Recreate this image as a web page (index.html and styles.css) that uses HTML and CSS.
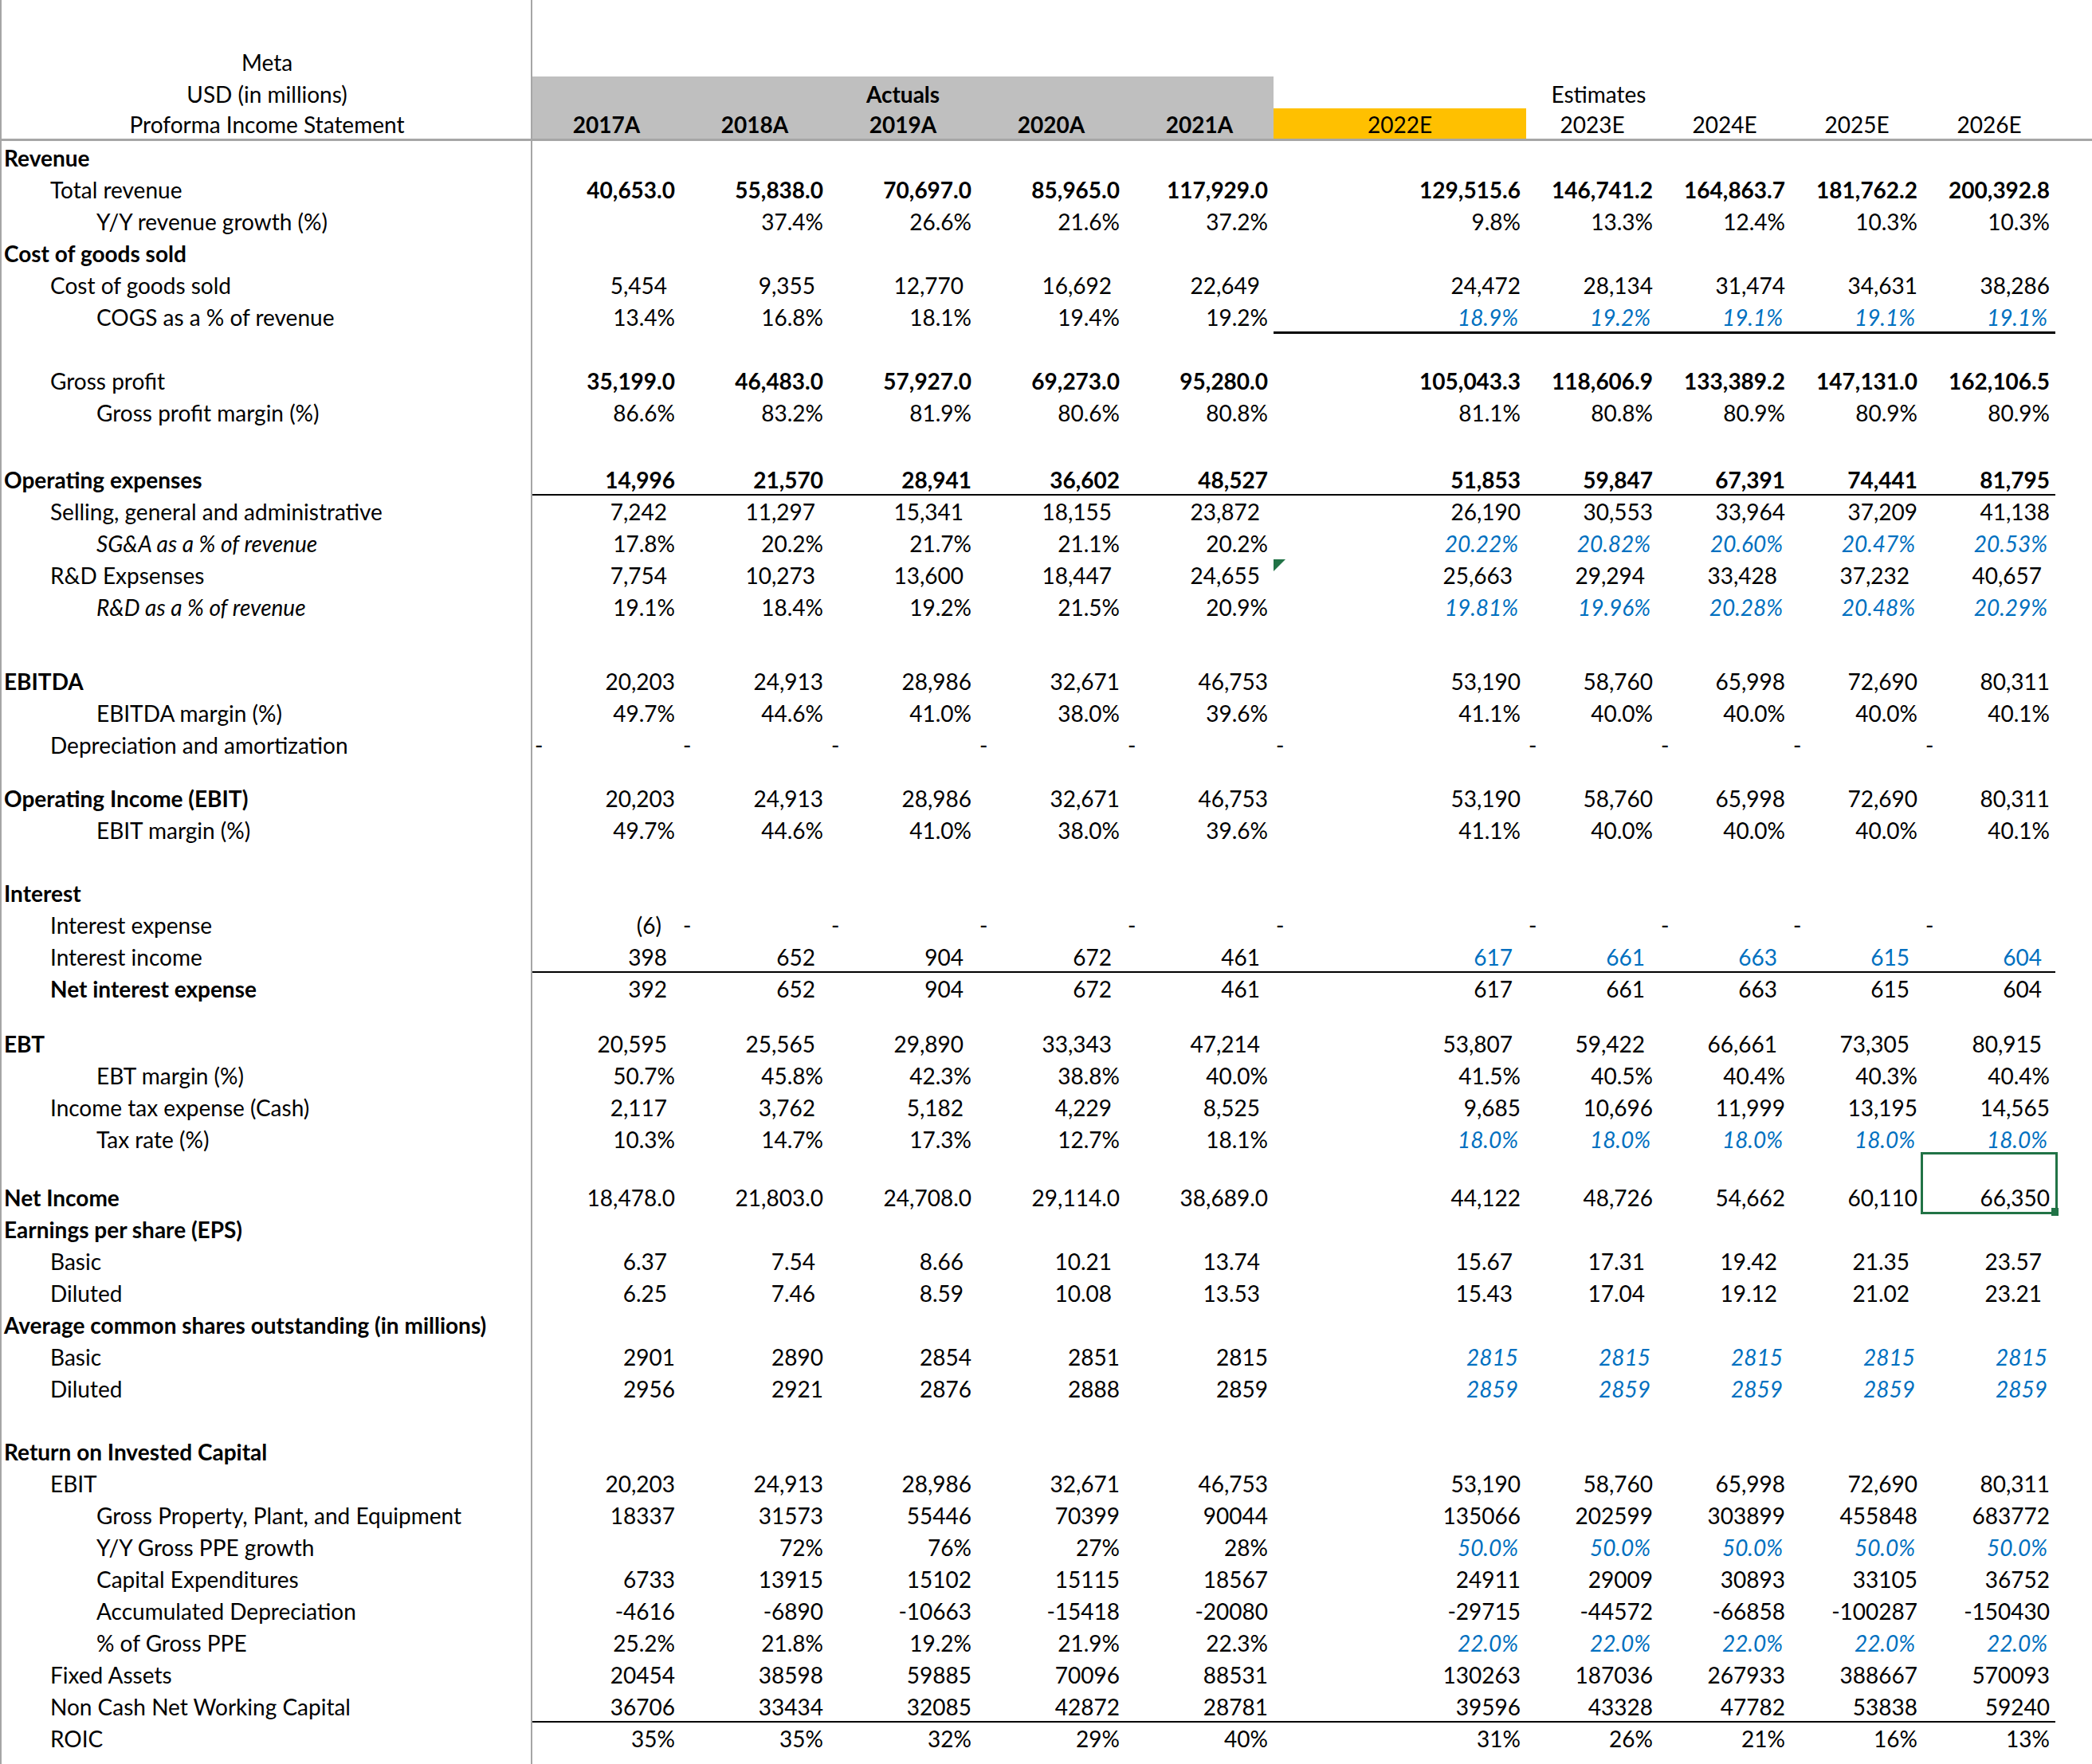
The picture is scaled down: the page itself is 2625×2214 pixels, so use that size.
FILE: index.html
```html
<!DOCTYPE html>
<html lang="en">
<head>
<meta charset="utf-8">
<title>Meta Proforma Income Statement</title>
<link rel="stylesheet" href="styles.css">
</head>
<body>
<div class="sheet">
  <div class="row h56"></div>
  <div class="row"><div class="c ctr">Meta</div></div>
  <div class="row">
    <div class="c ctr">USD (in millions)</div>
    <div class="c ctr gray actuals b">Actuals</div>
    <div class="c"></div>
    <div class="c ctr est">Estimates</div>
  </div>
  <div class="row hline">
    <div class="c ctr">Proforma Income Statement</div>
    <div class="c ctr gray b">2017A</div>
    <div class="c ctr gray b">2018A</div>
    <div class="c ctr gray b">2019A</div>
    <div class="c ctr gray b">2020A</div>
    <div class="c ctr gray b">2021A</div>
    <div class="c ctr yellow">2022E</div>
    <div class="c ctr">2023E</div>
    <div class="c ctr">2024E</div>
    <div class="c ctr">2025E</div>
    <div class="c ctr">2026E</div>
  </div>

  <div class="row h39"><div class="c lbl l0 b">Revenue</div></div>
  <div class="row">
    <div class="c lbl l1">Total revenue</div>
    <div class="c b">40,653.0</div><div class="c b">55,838.0</div><div class="c b">70,697.0</div><div class="c b">85,965.0</div><div class="c b">117,929.0</div>
    <div class="c b">129,515.6</div><div class="c b">146,741.2</div><div class="c b">164,863.7</div><div class="c b">181,762.2</div><div class="c b">200,392.8</div>
  </div>
  <div class="row">
    <div class="c lbl l2">Y/Y revenue growth (%)</div>
    <div class="c"></div><div class="c">37.4%</div><div class="c">26.6%</div><div class="c">21.6%</div><div class="c">37.2%</div>
    <div class="c">9.8%</div><div class="c">13.3%</div><div class="c">12.4%</div><div class="c">10.3%</div><div class="c">10.3%</div>
  </div>
  <div class="row"><div class="c lbl l0 b">Cost of goods sold</div></div>
  <div class="row">
    <div class="c lbl l1">Cost of goods sold</div>
    <div class="c w">5,454</div><div class="c w">9,355</div><div class="c w">12,770</div><div class="c w">16,692</div><div class="c w">22,649</div>
    <div class="c">24,472</div><div class="c">28,134</div><div class="c">31,474</div><div class="c">34,631</div><div class="c">38,286</div>
  </div>
  <div class="row">
    <div class="c lbl l2">COGS as a % of revenue</div>
    <div class="c">13.4%</div><div class="c">16.8%</div><div class="c">18.1%</div><div class="c">19.4%</div><div class="c">19.2%</div>
    <div class="c i u3">18.9%</div><div class="c i u3">19.2%</div><div class="c i u3">19.1%</div><div class="c i u3">19.1%</div><div class="c i u3">19.1%</div>
  </div>
  <div class="row g40"></div>
  <div class="row">
    <div class="c lbl l1">Gross profit</div>
    <div class="c b">35,199.0</div><div class="c b">46,483.0</div><div class="c b">57,927.0</div><div class="c b">69,273.0</div><div class="c b">95,280.0</div>
    <div class="c b">105,043.3</div><div class="c b">118,606.9</div><div class="c b">133,389.2</div><div class="c b">147,131.0</div><div class="c b">162,106.5</div>
  </div>
  <div class="row">
    <div class="c lbl l2">Gross profit margin (%)</div>
    <div class="c">86.6%</div><div class="c">83.2%</div><div class="c">81.9%</div><div class="c">80.6%</div><div class="c">80.8%</div>
    <div class="c">81.1%</div><div class="c">80.8%</div><div class="c">80.9%</div><div class="c">80.9%</div><div class="c">80.9%</div>
  </div>
  <div class="row g44"></div>
  <div class="row">
    <div class="c lbl l0 b">Operating expenses</div>
    <div class="c b u2">14,996</div><div class="c b u2">21,570</div><div class="c b u2">28,941</div><div class="c b u2">36,602</div><div class="c b u2">48,527</div>
    <div class="c b u2">51,853</div><div class="c b u2">59,847</div><div class="c b u2">67,391</div><div class="c b u2">74,441</div><div class="c b u2">81,795</div>
  </div>
  <div class="row">
    <div class="c lbl l1">Selling, general and administrative</div>
    <div class="c w">7,242</div><div class="c w">11,297</div><div class="c w">15,341</div><div class="c w">18,155</div><div class="c w">23,872</div>
    <div class="c">26,190</div><div class="c">30,553</div><div class="c">33,964</div><div class="c">37,209</div><div class="c">41,138</div>
  </div>
  <div class="row">
    <div class="c lbl l2 it">SG&amp;A as a % of revenue</div>
    <div class="c">17.8%</div><div class="c">20.2%</div><div class="c">21.7%</div><div class="c">21.1%</div><div class="c">20.2%</div>
    <div class="c i">20.22%</div><div class="c i">20.82%</div><div class="c i">20.60%</div><div class="c i">20.47%</div><div class="c i">20.53%</div>
  </div>
  <div class="row">
    <div class="c lbl l1">R&amp;D Expsenses</div>
    <div class="c w">7,754</div><div class="c w">10,273</div><div class="c w">13,600</div><div class="c w">18,447</div><div class="c w">24,655</div>
    <div class="c w tri">25,663</div><div class="c w">29,294</div><div class="c w">33,428</div><div class="c w">37,232</div><div class="c w">40,657</div>
  </div>
  <div class="row">
    <div class="c lbl l2 it">R&amp;D as a % of revenue</div>
    <div class="c">19.1%</div><div class="c">18.4%</div><div class="c">19.2%</div><div class="c">21.5%</div><div class="c">20.9%</div>
    <div class="c i">19.81%</div><div class="c i">19.96%</div><div class="c i">20.28%</div><div class="c i">20.48%</div><div class="c i">20.29%</div>
  </div>
  <div class="row g53"></div>
  <div class="row">
    <div class="c lbl l0 b">EBITDA</div>
    <div class="c">20,203</div><div class="c">24,913</div><div class="c">28,986</div><div class="c">32,671</div><div class="c">46,753</div>
    <div class="c">53,190</div><div class="c">58,760</div><div class="c">65,998</div><div class="c">72,690</div><div class="c">80,311</div>
  </div>
  <div class="row">
    <div class="c lbl l2">EBITDA margin (%)</div>
    <div class="c">49.7%</div><div class="c">44.6%</div><div class="c">41.0%</div><div class="c">38.0%</div><div class="c">39.6%</div>
    <div class="c">41.1%</div><div class="c">40.0%</div><div class="c">40.0%</div><div class="c">40.0%</div><div class="c">40.1%</div>
  </div>
  <div class="row">
    <div class="c lbl l1">Depreciation and amortization</div>
    <div class="c d">-</div><div class="c d">-</div><div class="c d">-</div><div class="c d">-</div><div class="c d">-</div>
    <div class="c d">-</div><div class="c d">-</div><div class="c d">-</div><div class="c d">-</div><div class="c d">-</div>
  </div>
  <div class="row g27"></div>
  <div class="row">
    <div class="c lbl l0 b">Operating Income (EBIT)</div>
    <div class="c">20,203</div><div class="c">24,913</div><div class="c">28,986</div><div class="c">32,671</div><div class="c">46,753</div>
    <div class="c">53,190</div><div class="c">58,760</div><div class="c">65,998</div><div class="c">72,690</div><div class="c">80,311</div>
  </div>
  <div class="row">
    <div class="c lbl l2">EBIT margin (%)</div>
    <div class="c">49.7%</div><div class="c">44.6%</div><div class="c">41.0%</div><div class="c">38.0%</div><div class="c">39.6%</div>
    <div class="c">41.1%</div><div class="c">40.0%</div><div class="c">40.0%</div><div class="c">40.0%</div><div class="c">40.1%</div>
  </div>
  <div class="row g39"></div>
  <div class="row"><div class="c lbl l0 b">Interest</div></div>
  <div class="row">
    <div class="c lbl l1">Interest expense</div>
    <div class="c neg">(6)</div><div class="c d">-</div><div class="c d">-</div><div class="c d">-</div><div class="c d">-</div>
    <div class="c d">-</div><div class="c d">-</div><div class="c d">-</div><div class="c d">-</div><div class="c d">-</div>
  </div>
  <div class="row">
    <div class="c lbl l1">Interest income</div>
    <div class="c w u2">398</div><div class="c w u2">652</div><div class="c w u2">904</div><div class="c w u2">672</div><div class="c w u2">461</div>
    <div class="c w u2 blue">617</div><div class="c w u2 blue">661</div><div class="c w u2 blue">663</div><div class="c w u2 blue">615</div><div class="c w u2 blue">604</div>
  </div>
  <div class="row">
    <div class="c lbl l1 b">Net interest expense</div>
    <div class="c w">392</div><div class="c w">652</div><div class="c w">904</div><div class="c w">672</div><div class="c w">461</div>
    <div class="c w">617</div><div class="c w">661</div><div class="c w">663</div><div class="c w">615</div><div class="c w">604</div>
  </div>
  <div class="row g29"></div>
  <div class="row">
    <div class="c lbl l0 b">EBT</div>
    <div class="c w">20,595</div><div class="c w">25,565</div><div class="c w">29,890</div><div class="c w">33,343</div><div class="c w">47,214</div>
    <div class="c w">53,807</div><div class="c w">59,422</div><div class="c w">66,661</div><div class="c w">73,305</div><div class="c w">80,915</div>
  </div>
  <div class="row">
    <div class="c lbl l2">EBT margin (%)</div>
    <div class="c">50.7%</div><div class="c">45.8%</div><div class="c">42.3%</div><div class="c">38.8%</div><div class="c">40.0%</div>
    <div class="c">41.5%</div><div class="c">40.5%</div><div class="c">40.4%</div><div class="c">40.3%</div><div class="c">40.4%</div>
  </div>
  <div class="row">
    <div class="c lbl l1">Income tax expense (Cash)</div>
    <div class="c w">2,117</div><div class="c w">3,762</div><div class="c w">5,182</div><div class="c w">4,229</div><div class="c w">8,525</div>
    <div class="c">9,685</div><div class="c">10,696</div><div class="c">11,999</div><div class="c">13,195</div><div class="c">14,565</div>
  </div>
  <div class="row">
    <div class="c lbl l2">Tax rate (%)</div>
    <div class="c">10.3%</div><div class="c">14.7%</div><div class="c">17.3%</div><div class="c">12.7%</div><div class="c">18.1%</div>
    <div class="c i">18.0%</div><div class="c i">18.0%</div><div class="c i">18.0%</div><div class="c i">18.0%</div><div class="c i">18.0%</div>
  </div>
  <div class="row h73">
    <div class="c lbl l0 b rowsel">Net Income</div>
    <div class="c">18,478.0</div><div class="c">21,803.0</div><div class="c">24,708.0</div><div class="c">29,114.0</div><div class="c">38,689.0</div>
    <div class="c">44,122</div><div class="c">48,726</div><div class="c">54,662</div><div class="c">60,110</div><div class="c sel">66,350</div>
  </div>
  <div class="row"><div class="c lbl l0 b">Earnings per share (EPS)</div></div>
  <div class="row">
    <div class="c lbl l1">Basic</div>
    <div class="c w">6.37</div><div class="c w">7.54</div><div class="c w">8.66</div><div class="c w">10.21</div><div class="c w">13.74</div>
    <div class="c w">15.67</div><div class="c w">17.31</div><div class="c w">19.42</div><div class="c w">21.35</div><div class="c w">23.57</div>
  </div>
  <div class="row">
    <div class="c lbl l1">Diluted</div>
    <div class="c w">6.25</div><div class="c w">7.46</div><div class="c w">8.59</div><div class="c w">10.08</div><div class="c w">13.53</div>
    <div class="c w">15.43</div><div class="c w">17.04</div><div class="c w">19.12</div><div class="c w">21.02</div><div class="c w">23.21</div>
  </div>
  <div class="row"><div class="c lbl l0 b">Average common shares outstanding (in millions)</div></div>
  <div class="row">
    <div class="c lbl l1">Basic</div>
    <div class="c">2901</div><div class="c">2890</div><div class="c">2854</div><div class="c">2851</div><div class="c">2815</div>
    <div class="c i">2815</div><div class="c i">2815</div><div class="c i">2815</div><div class="c i">2815</div><div class="c i">2815</div>
  </div>
  <div class="row">
    <div class="c lbl l1">Diluted</div>
    <div class="c">2956</div><div class="c">2921</div><div class="c">2876</div><div class="c">2888</div><div class="c">2859</div>
    <div class="c i">2859</div><div class="c i">2859</div><div class="c i">2859</div><div class="c i">2859</div><div class="c i">2859</div>
  </div>
  <div class="row g39"></div>
  <div class="row"><div class="c lbl l0 b">Return on Invested Capital</div></div>
  <div class="row">
    <div class="c lbl l1">EBIT</div>
    <div class="c">20,203</div><div class="c">24,913</div><div class="c">28,986</div><div class="c">32,671</div><div class="c">46,753</div>
    <div class="c">53,190</div><div class="c">58,760</div><div class="c">65,998</div><div class="c">72,690</div><div class="c">80,311</div>
  </div>
  <div class="row">
    <div class="c lbl l2">Gross Property, Plant, and Equipment</div>
    <div class="c">18337</div><div class="c">31573</div><div class="c">55446</div><div class="c">70399</div><div class="c">90044</div>
    <div class="c">135066</div><div class="c">202599</div><div class="c">303899</div><div class="c">455848</div><div class="c">683772</div>
  </div>
  <div class="row">
    <div class="c lbl l2">Y/Y Gross PPE growth</div>
    <div class="c"></div><div class="c">72%</div><div class="c">76%</div><div class="c">27%</div><div class="c">28%</div>
    <div class="c i">50.0%</div><div class="c i">50.0%</div><div class="c i">50.0%</div><div class="c i">50.0%</div><div class="c i">50.0%</div>
  </div>
  <div class="row">
    <div class="c lbl l2">Capital Expenditures</div>
    <div class="c">6733</div><div class="c">13915</div><div class="c">15102</div><div class="c">15115</div><div class="c">18567</div>
    <div class="c">24911</div><div class="c">29009</div><div class="c">30893</div><div class="c">33105</div><div class="c">36752</div>
  </div>
  <div class="row">
    <div class="c lbl l2">Accumulated Depreciation</div>
    <div class="c">-4616</div><div class="c">-6890</div><div class="c">-10663</div><div class="c">-15418</div><div class="c">-20080</div>
    <div class="c">-29715</div><div class="c">-44572</div><div class="c">-66858</div><div class="c">-100287</div><div class="c">-150430</div>
  </div>
  <div class="row">
    <div class="c lbl l2">% of Gross PPE</div>
    <div class="c">25.2%</div><div class="c">21.8%</div><div class="c">19.2%</div><div class="c">21.9%</div><div class="c">22.3%</div>
    <div class="c i">22.0%</div><div class="c i">22.0%</div><div class="c i">22.0%</div><div class="c i">22.0%</div><div class="c i">22.0%</div>
  </div>
  <div class="row">
    <div class="c lbl l1">Fixed Assets</div>
    <div class="c">20454</div><div class="c">38598</div><div class="c">59885</div><div class="c">70096</div><div class="c">88531</div>
    <div class="c">130263</div><div class="c">187036</div><div class="c">267933</div><div class="c">388667</div><div class="c">570093</div>
  </div>
  <div class="row">
    <div class="c lbl l1">Non Cash Net Working Capital</div>
    <div class="c u2">36706</div><div class="c u2">33434</div><div class="c u2">32085</div><div class="c u2">42872</div><div class="c u2">28781</div>
    <div class="c u2">39596</div><div class="c u2">43328</div><div class="c u2">47782</div><div class="c u2">53838</div><div class="c u2">59240</div>
  </div>
  <div class="row">
    <div class="c lbl l1">ROIC</div>
    <div class="c">35%</div><div class="c">35%</div><div class="c">32%</div><div class="c">29%</div><div class="c">40%</div>
    <div class="c">31%</div><div class="c">26%</div><div class="c">21%</div><div class="c">16%</div><div class="c">13%</div>
  </div>
</div>
</body>
</html>
```

FILE: styles.css
```css
html, body {
  margin: 0;
  padding: 0;
  background: #ffffff;
}

body {
  font-family: Lato, "Liberation Sans", sans-serif;
  font-size: 28px;
  color: #000000;
}

.sheet {
  width: 2625px;
  min-height: 2214px;
  box-sizing: border-box;
  border-left: 2px solid #a6a6a6;
  background: linear-gradient(#a6a6a6, #a6a6a6) 664px 0 / 2px 100% no-repeat;
  overflow: hidden;
}

.row {
  display: grid;
  grid-template-columns: 666px repeat(5, 186px) 317px repeat(4, 166px) 1fr;
  height: 40px;
  box-sizing: border-box;
}

.h56 { height: 56px; }
.h39 { height: 39px; }
.h73 { height: 73px; }
.g40 { height: 40px; }
.g44 { height: 44px; }
.g53 { height: 53px; }
.g27 { height: 27px; }
.g39 { height: 39px; }
.g29 { height: 29px; }

.hline {
  height: 41px;
  border-bottom: 3px solid #a6a6a6;
}

.c {
  display: flex;
  align-items: flex-end;
  justify-content: flex-end;
  padding: 0 7px 3px 0;
  line-height: 30px;
  white-space: nowrap;
  box-sizing: border-box;
  min-width: 0;
}

.ctr {
  justify-content: center;
  padding-right: 0;
}

.lbl {
  justify-content: flex-start;
  padding-right: 0;
}

.l0 { padding-left: 3px; }
.l1 { padding-left: 61px; }
.l2 { padding-left: 119px; }

.b { font-weight: 700; }
.it { font-style: italic; }

.gray { background: #bfbfbf; }
.yellow { background: #ffc000; }

.actuals { grid-column: 2 / span 5; }
.est { padding-left: 16px; }

.w { padding-right: 17px; }
.neg { padding-right: 24px; }

.i {
  font-style: italic;
  color: #0070c0;
  padding-right: 10px;
}

.blue { color: #0070c0; }

.d {
  justify-content: flex-start;
  padding-left: 3px;
  padding-right: 0;
}

.u2 { box-shadow: 0 2px 0 #000000; }
.u3 { box-shadow: 0 3px 0 #000000; }

.tri { position: relative; }
.tri::before {
  content: "";
  position: absolute;
  left: 0;
  top: 2px;
  border-top: 15px solid #217346;
  border-right: 15px solid transparent;
}

.rowsel { box-shadow: -2px 0 0 #217346; }

.sel { position: relative; }
.sel::after {
  content: "";
  position: absolute;
  left: -3px;
  top: -2px;
  right: -3px;
  bottom: -3px;
  border: 3px solid #217346;
}
.sel::before {
  content: "";
  position: absolute;
  right: -4px;
  bottom: -5px;
  width: 9px;
  height: 10px;
  background: #217346;
  z-index: 1;
}
```
